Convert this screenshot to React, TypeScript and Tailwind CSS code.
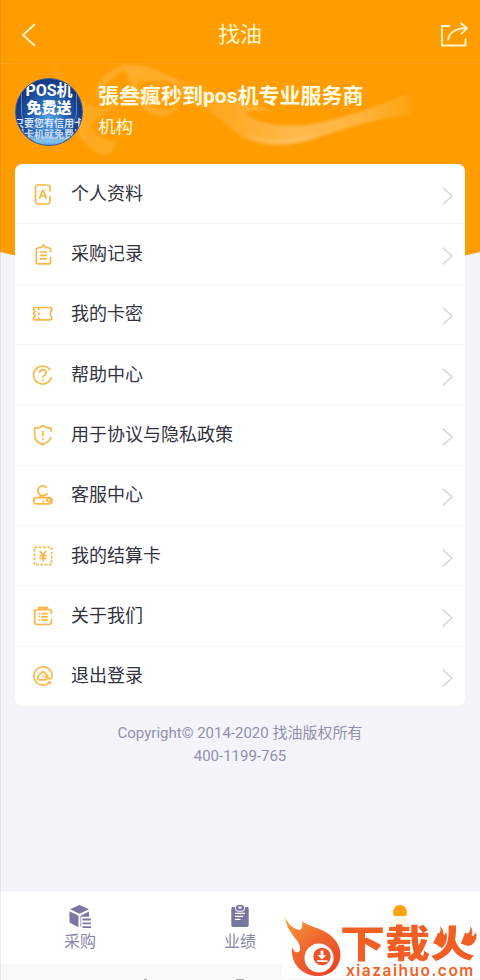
import type { ReactNode } from "react";

type MenuItem = {
  label: string;
  icon: ReactNode;
};

const MENU_ITEMS: MenuItem[] = [
  {
    label: "个人资料",
    icon: (
      <>
        <path d="M18 8.5V4.700A2.700 2.700 0 0 0 15.300 2H6.200A2.700 2.700 0 0 0 3.500 4.700v13.600A2.700 2.700 0 0 0 6.200 21h9.100a2.700 2.700 0 0 0 2.700-2.700v-5.300" />
        <path d="m7.300 16 3.600-9 3.700 9M8.700 13h4.300M13.200 7h1" />
      </>
    ),
  },
  {
    label: "采购记录",
    icon: (
      <>
        <path d="M18.500 9.500V5.700l-2.600-1.200h-2.200L11.500 2 9.200 4.500H7L4.300 5.700v13.900c0 .8.500 1.200 1.200 1.200h11.800c.8 0 1.200-.5 1.200-1.200V14" />
        <path d="M8 9h7M8 12.400h7M8 15.800h7" />
      </>
    ),
  },
  {
    label: "我的卡密",
    icon: (
      <>
        <path d="M3 4.500h14.800c1.200 0 2 .8 2 1.800 0 1.400-1.400 2.200-1.400 4.400s1.400 3 1.400 4.400c0 1-.8 1.800-2 1.800H3.200c-1.100 0-1.800-.8-1.800-1.700 0-1 1.800-1.400 1.800-2.600 0-1-1.800-1.200-1.800-2.400 0-1 1.800-1.100 1.800-2.200S1.400 7.500 1.400 6.200C1.400 5.200 2 4.500 3 4.500" />
        <path d="M6.800 5v2.200M6.800 9.300V12M6.800 14.300v2.200" />
      </>
    ),
  },
  {
    label: "帮助中心",
    icon: (
      <>
        <path d="M18.200 6.200A9 9 0 1 0 19.300 13.200" />
        <path d="M7.600 9c0-2 1.400-3.400 3.300-3.400 2 0 3.300 1.300 3.300 3 0 2.500-3.300 2.500-3.300 4.800M10.900 15.200v1.500" />
      </>
    ),
  },
  {
    label: "用于协议与隐私政策",
    icon: (
      <>
        <path d="M19 8V4.200c-3.400 0-6-.7-8.200-2.500C8.600 3.500 6 4.200 2.600 4.200v7.700c0 4 3.200 6.800 8.200 8.700 4.400-1.800 7.400-4.200 8-7.400" />
        <path d="M10.900 6.800v5.800M10.900 14.400v1.800" />
      </>
    ),
  },
  {
    label: "客服中心",
    icon: (
      <>
        <path d="M15 3.900A5 5 0 1 0 15.400 9" />
        <rect x="1.600" y="13.600" width="18.500" height="6.200" rx="3.100" />
        <path d="M8 13.400c0-1 .9-1.700 2.200-1.700h2M11 16.400v2" />
        <circle cx="16.800" cy="15.800" r="1.800" />
      </>
    ),
  },
  {
    label: "我的结算卡",
    icon: (
      <>
        <rect x="2.400" y="2.400" width="17.200" height="17.200" strokeDasharray="2.700 1.600" />
        <path d="m7.800 6 3.200 4 3.200-4M7.500 10.700h7M7.500 13.400h7M11 10v6.500" />
      </>
    ),
  },
  {
    label: "关于我们",
    icon: (
      <>
        <path d="M19.400 9V7c0-1.400-1-2.400-2.400-2.400H5.100c-1.400 0-2.400 1-2.400 2.400v10.100c0 1.400 1 2.400 2.400 2.400H17c1.400 0 2.400-1 2.400-2.400v-3.300" />
        <path d="M5.800 2.700h10.400" strokeWidth="2.200" />
        <path d="M6.500 8.700h1.300M9.200 8.700h6.500M6.500 11.900h1.300M9.200 11.900h6.500M6.500 15.100h1.300M9.200 15.100h6.500" />
      </>
    ),
  },
  {
    label: "退出登录",
    icon: (
      <>
        <path d="M17.300 17.600a9.100 9.100 0 1 1 2.800-7.100c.1 2-.6 3.200-2 3.200-1.200 0-2-.9-2-2.300" />
        <path d="M16.100 11.200 11 6.300l-5 4.800v2.600c0 .7.500 1.200 1.200 1.200H13c1.200 0 2-.7 2-1.800 0-1-.8-1.600-1.800-1.600h-2.700" />
        <circle cx="17.600" cy="17.700" r=".8" />
      </>
    ),
  },
];

function Backdrop() {
  return (
    <svg className="absolute left-0 top-0 h-[290px] w-[480px]" viewBox="0 0 480 290">
      <defs>
        <filter id="soft" x="-10%" y="-10%" width="120%" height="120%">
          <feGaussianBlur stdDeviation="1.500" />
        </filter>
        <linearGradient id="tail" x1="0" x2="1">
          <stop offset="0" stopColor="#fff" stopOpacity="0.040" />
          <stop offset="0.280" stopColor="#fff" stopOpacity="0.140" />
          <stop offset="0.550" stopColor="#fff" stopOpacity="0.300" />
          <stop offset="0.800" stopColor="#fff" stopOpacity="0.240" />
          <stop offset="1" stopColor="#fff" stopOpacity="0.060" />
        </linearGradient>
      </defs>
      <path d="M0 0H480V252Q240 310 0 252Z" fill="#ff9c00" />
      <path d="M0 63.500H480" stroke="#ffad2c" strokeOpacity="0.450" />
      <g filter="url(#soft)">
        <path
          d="M160 73C183 79 201 87 216 94C240 102 257 104 272 112C258 109 250 110 246 114C257 123 278 127 306 125C345 119 378 106 411 92V114C374 119 340 130 308 141C276 149 248 144 235 132C220 119 207 108 185 97Z"
          fill="url(#tail)"
        />
        <path d="M242 132C265 142 290 141 325 132C295 146 262 151 242 132Z" fill="#fff" opacity="0.100" />
        <path
          d="M96 88C104 70 119 63 137 65C153 67 168 75 184 84C165 81 147 78 136 84C144 108 166 118 180 103C174 118 155 118 144 109C134 99 128 84 126 70C114 72 104 85 96 98Z"
          fill="#fff"
          opacity="0.160"
        />
        <path
          d="M84 99C74 119 74 139 91 148C99 157 109 158 114 149C115 143 119 139 119 139C110 144 98 137 91 127C90 119 114 112 120 100C107 108 92 113 84 99Z"
          fill="#fff"
          opacity="0.130"
        />
        <path
          d="M54 65C66 85 76 106 84 139M91 110C98 82 121 67 140 73C161 80 177 99 176 109C168 121 154 117 145 111"
          fill="none"
          stroke="#fff"
          strokeWidth="1.500"
          opacity="0.080"
        />
      </g>
    </svg>
  );
}

function Avatar() {
  return (
    <div className="relative h-[68px] w-[68px] shrink-0 overflow-hidden rounded-full border border-[#385fa5] bg-[radial-gradient(ellipse_at_50%_60%,#5ba6e4_0%,#2460b0_38%,#142f78_76%)] font-bold text-white">
      <div className="absolute inset-x-[5px] -top-2 h-[59px] rounded-b-[18px] border border-[#77b9f3]/60" />
      <div className="absolute bottom-0 left-2 h-2 w-[52px] rounded-full bg-[#9bdcff] blur-[3px]" />
      <div className="relative flex flex-col items-center whitespace-nowrap">
        <span className="mt-[3px] text-[16px] leading-[18px]">POS机</span>
        <span className="text-[15px] font-black leading-[17px]">免费送</span>
        <span className="mt-px text-[10px] leading-[11px] text-[#d9e2f4]">只要您有信用卡</span>
        <span className="text-[10px] leading-[11px] text-[#c7daf4]">刷卡机就免费送</span>
      </div>
    </div>
  );
}

function MenuRow({ item }: { item: MenuItem }) {
  return (
    <li className="flex flex-1 items-center border-b border-[#f4f4f6] pl-[17px] pr-[12px] last:border-b-0">
      <svg
        className="h-[22px] w-[22px] shrink-0"
        viewBox="0 0 22 22"
        fill="none"
        stroke="#fab744"
        strokeWidth="1.700"
        strokeLinejoin="round"
      >
        {item.icon}
      </svg>
      <span className="ml-[17px] flex-1 text-[18px] leading-6 text-[#32323f]">{item.label}</span>
      <svg className="mt-[4px] h-[18px] w-[11px]" viewBox="0 0 11 18" fill="none" stroke="#d9d9dd" strokeWidth="1.600">
        <path d="m.7.700 9.300 8.300L.7 17.300" />
      </svg>
    </li>
  );
}

function TabBar() {
  return (
    <nav className="grid h-[74px] grid-cols-3 border-t border-[#eeeef2] bg-white text-[16px] leading-5 text-[#8987a5]">
      <div className="flex flex-col items-center pt-[13px]">
        <svg className="h-[26px] w-[24px]" viewBox="0 0 24 26" fill="#7977a2">
          <path d="m11.500 1 9.500 4.300-9.500 4.500-9.500-4.500ZM1.500 7.300l9 4.500v11.400l-9-4.700ZM12.500 11.800l8.500-4.300v5.200h-7.800v9.800l-.7.400ZM14.500 14.500H23v1.900h-8.500ZM14.500 18.400H23v1.900h-8.500ZM14.500 22.300H23v1.700h-8.500Z" />
        </svg>
        <span className="mt-[2px]">采购</span>
      </div>
      <div className="flex flex-col items-center pt-[13px]">
        <svg className="h-[26px] w-[24px]" viewBox="0 0 24 26" fill="#7977a2">
          <path d="M5 3h14c1 0 1.700.7 1.700 1.700v16.600c0 1-.7 1.700-1.700 1.700H5c-1 0-1.700-.7-1.700-1.700V4.700C3.300 3.700 4 3 5 3Z" />
          <rect x="7.500" y=".5" width="9" height="6.700" rx="2.500" stroke="white" />
          <rect x="10.200" y="2.600" width="3.600" height="2" rx="1" fill="white" />
          <path d="M7 9.300h10M7 12.300h8M7 15.300h5.500" stroke="white" strokeWidth="1.300" />
        </svg>
        <span className="mt-[2px]">业绩</span>
      </div>
      <div className="flex flex-col items-center pt-[14px]">
        <span className="h-[14px] w-[14px] rounded-full bg-[#ffa20d]" />
      </div>
    </nav>
  );
}

function Watermark() {
  return (
    <div className="absolute bottom-[2px] right-0 h-[62px] w-[198px] bg-white text-[#f25f24]">
      <svg className="absolute left-0 top-0 h-[62px] w-[198px]" viewBox="0 0 198 62">
        <defs>
          <linearGradient id="flame" x1="0" y1="0" x2=".7" y2="1">
            <stop offset="0" stopColor="#f7a13c" />
            <stop offset=".5" stopColor="#f0692f" />
            <stop offset="1" stopColor="#ed4527" />
          </linearGradient>
        </defs>
        <path
          d="M3 1C6 8 11 13 18 14C21 12 21 7 19 5C29 12 44 12 53 24C65 39 56 59 38 60C21 61 8 48 10 31C12 38 19 38 18 31C18 24 5 18 3 1Z"
          fill="url(#flame)"
        />
        <circle cx="37" cy="42" r="14.500" fill="white" />
        <circle cx="40" cy="40.500" r="8.700" fill="#ef5129" />
        <path d="M38.600 34.500h2.800v4.500h3L40 43.500 35.600 39h3ZM35 44.300h10.500v1.700H35Z" fill="white" />
        <path d="M115 0h6c4 3 7 7 8 12h-20c1-5 3-9 6-12" fill="#fff1da" opacity=".7" />
      </svg>
      <div className="absolute left-[58px] top-[10px] flex origin-left scale-x-[1.200] whitespace-nowrap text-[37.500px] font-black leading-[36px]">
        下载火
      </div>
      <svg className="absolute left-[152px] top-[10px] h-[24px] w-[44px]" viewBox="0 0 44 24" fill="#f25f24">
        <path d="M6 0c3 3 4 6 3 10 2-1 3-3 3-5 2 6 1 13-4 17C3 20 0 16 2 11c1 1 2 2 3 3C4 9 8 5 6 0ZM36 0c3 3 3 7 1 10 3 0 4-2 5-4 2 7-2 13-8 14-4-2-5-6-4-10 1 1 1 2 3 3-1-6 5-7 3-13Z" />
      </svg>
      <div className="absolute left-[64px] top-[49px] font-[Inter] text-[15.500px] font-semibold leading-[12px] tracking-[1.500px]">
        xiazaihuo.com
      </div>
    </div>
  );
}

export default function App() {
  return (
    <div className="relative flex h-[980px] w-[480px] flex-col overflow-hidden bg-[#f3f4fa] font-[Roboto,'Noto_Sans_CJK_SC',sans-serif]">
      <Backdrop />
      <header className="relative flex h-[64px] items-center justify-between pl-[21px] pr-[12px] pt-[5px] text-[#fff6cf]">
        <svg className="h-[24px] w-[15px]" viewBox="0 0 15 24" fill="none" stroke="currentColor" strokeWidth="1.800">
          <path d="M14 1 2 12l12 11" />
        </svg>
        <h1 className="ml-[4px] text-[22px] leading-8">找油</h1>
        <svg className="h-[26px] w-[28px]" viewBox="0 0 28 26" fill="none" stroke="currentColor" strokeWidth="1.800">
          <path d="M10 4H2v19.500h23.500v-7" />
          <path d="M8 18.500c.7-7.500 6-11.800 18-12.300M20.500 1 27 6.200l-6 6" />
        </svg>
      </header>

      <section className="relative flex h-[100px] pl-[15px] pt-[14px]">
        <Avatar />
        <div className="ml-[15px] whitespace-nowrap text-[#fffbe3]">
          <h2 className="mt-[3px] text-[21px] font-bold leading-[30px]">張叁瘋秒到pos机专业服务商</h2>
          <p className="mt-[3px] text-[17.500px] leading-[26px]">机构</p>
        </div>
      </section>

      <ul className="relative mx-[15px] flex h-[542px] flex-col rounded-[7px] bg-white">
        {MENU_ITEMS.map((item) => (
          <MenuRow key={item.label} item={item} />
        ))}
      </ul>

      <footer className="relative mt-[16px] flex-1 text-center text-[15px] leading-[23px] text-[#9190ac]">
        <p>Copyright© 2014-2020 找油版权所有</p>
        <p>400-1199-765</p>
      </footer>

      <TabBar />
      <div className="flex h-[16px] items-end bg-[#f9f9fb]">
        <span className="ml-[144px] h-px w-[3px] bg-[#a5a5aa]" />
        <span className="ml-[89px] h-px w-[8px] bg-[#a5a5aa]" />
      </div>
      <div className="absolute inset-y-0 left-0 w-px bg-[#777]/15" />
      <Watermark />
    </div>
  );
}
